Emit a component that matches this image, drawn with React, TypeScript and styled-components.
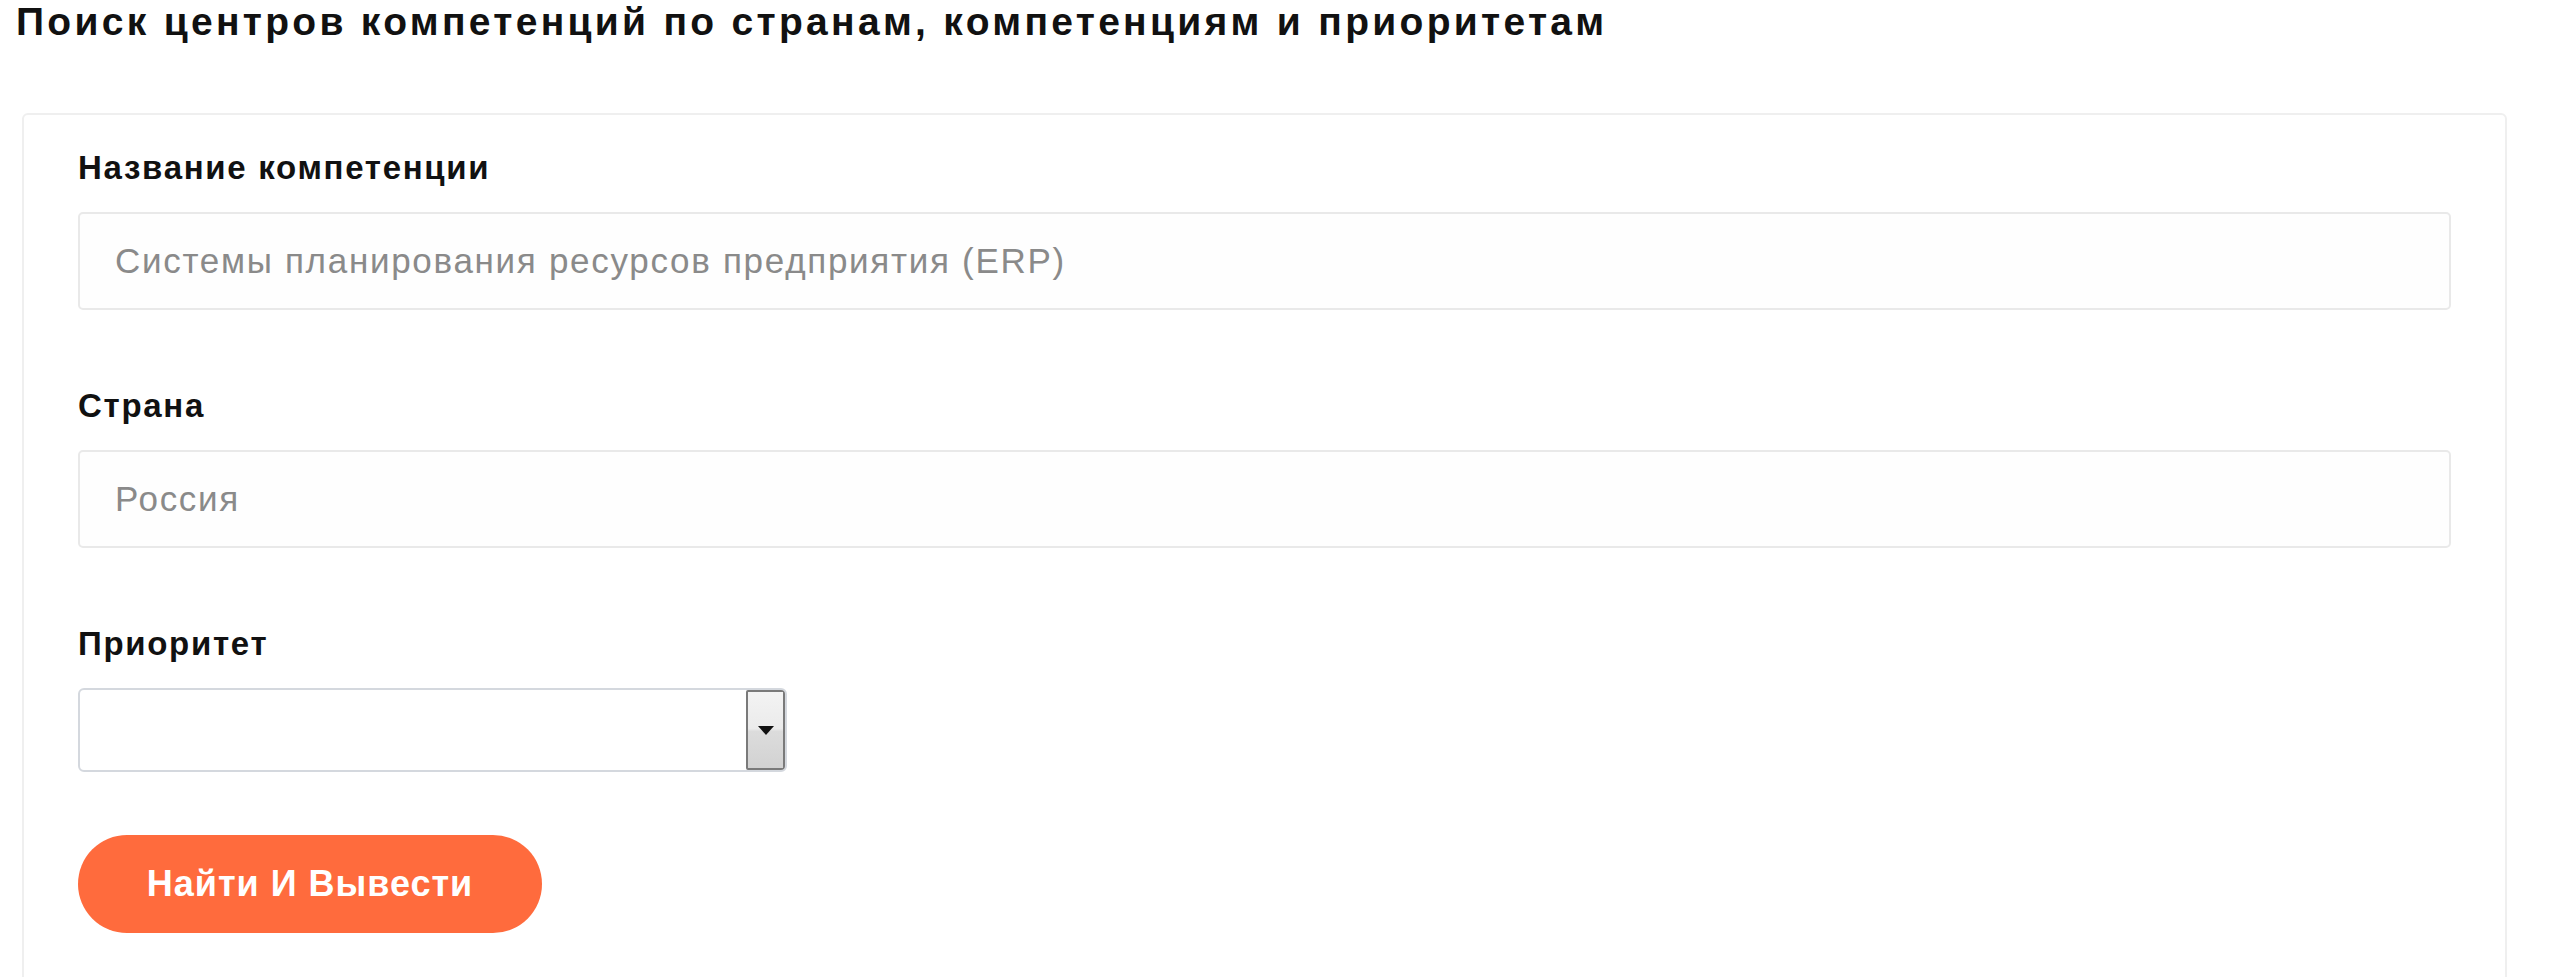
import React from 'react'
import styled, { createGlobalStyle } from 'styled-components'

const Global = createGlobalStyle`
body {
  margin: 0;
  background: #ffffff;
  font-family: "Liberation Sans", Arial, sans-serif;
}
`

const App = () => {
  return (
    <Page>
      <Global />
      <Title>Поиск центров компетенций по странам, компетенциям и приоритетам</Title>

      <Card>
        <Field>
          <Label>Название компетенции</Label>
          <TextInput placeholder="Системы планирования ресурсов предприятия (ERP)" />
        </Field>

        <Field>
          <Label>Страна</Label>
          <TextInput placeholder="Россия" />
        </Field>

        <Field>
          <Label>Приоритет</Label>
          <SelectBox>
            <Select defaultValue="">
              <option value=""></option>
              <option value="1">Высокий</option>
              <option value="2">Средний</option>
              <option value="3">Низкий</option>
            </Select>
            <ArrowBox>
              <Triangle />
            </ArrowBox>
          </SelectBox>
        </Field>

        <Submit type="button">Найти И Вывести</Submit>
      </Card>
    </Page>
  )
}

export default App

const Page = styled.div`
display: flex;
flex-direction: column;
`
const Title = styled.h1`
margin: 0;
padding-left: 16px;
font-size: 39px;
line-height: 44px;
letter-spacing: 3.3px;
font-weight: 700;
color: #111111;
`
const Card = styled.div`
margin: 69px 0 0 22px;
width: 2485px;
box-sizing: border-box;
border: 2px solid #efefef;
border-radius: 6px;
padding: 35px 54px 80px 54px;
display: flex;
flex-direction: column;
align-items: flex-start;
`
const Field = styled.div`
width: 100%;
display: flex;
flex-direction: column;
gap: 26px;
margin-bottom: 78px;

&:nth-of-type(3) {
  margin-bottom: 63px;
}
`
const Label = styled.label`
font-size: 33px;
line-height: 36px;
letter-spacing: 1.7px;
font-weight: 700;
color: #111111;
`
const TextInput = styled.input`
width: 100%;
height: 98px;
box-sizing: border-box;
border: 2px solid #e9e9e9;
border-radius: 5px;
background: #fefefe;
padding: 0 35px;
font-family: "Liberation Sans", Arial, sans-serif;
font-size: 35px;
letter-spacing: 1.7px;
color: #333;
outline: none;

&::placeholder {
  color: #8a8a8a;
}
`
const SelectBox = styled.div`
width: 709px;
height: 84px;
box-sizing: border-box;
border: 2px solid #d4d8de;
border-radius: 6px;
background: #ffffff;
display: flex;
overflow: hidden;
`
const Select = styled.select`
flex: 1;
appearance: none;
border: none;
background: transparent;
font-family: "Liberation Sans", Arial, sans-serif;
font-size: 31px;
padding: 0 16px;
outline: none;
`
const ArrowBox = styled.div`
width: 39px;
box-sizing: border-box;
border: 2px solid #7a7a7a;
border-radius: 2px;
background: linear-gradient(to bottom, #f3f3f3 0%, #ebebeb 48%, #dcdcdc 52%, #d2d2d2 100%);
display: flex;
align-items: center;
justify-content: center;
`
const Triangle = styled.span`
width: 0;
height: 0;
border-left: 8px solid transparent;
border-right: 8px solid transparent;
border-top: 9px solid #111111;
`
const Submit = styled.button`
width: 464px;
height: 98px;
border: none;
border-radius: 49px;
background: #ff6b3d;
color: #ffffff;
font-family: "Liberation Sans", Arial, sans-serif;
font-size: 36px;
letter-spacing: 1px;
font-weight: 700;
cursor: pointer;
`
